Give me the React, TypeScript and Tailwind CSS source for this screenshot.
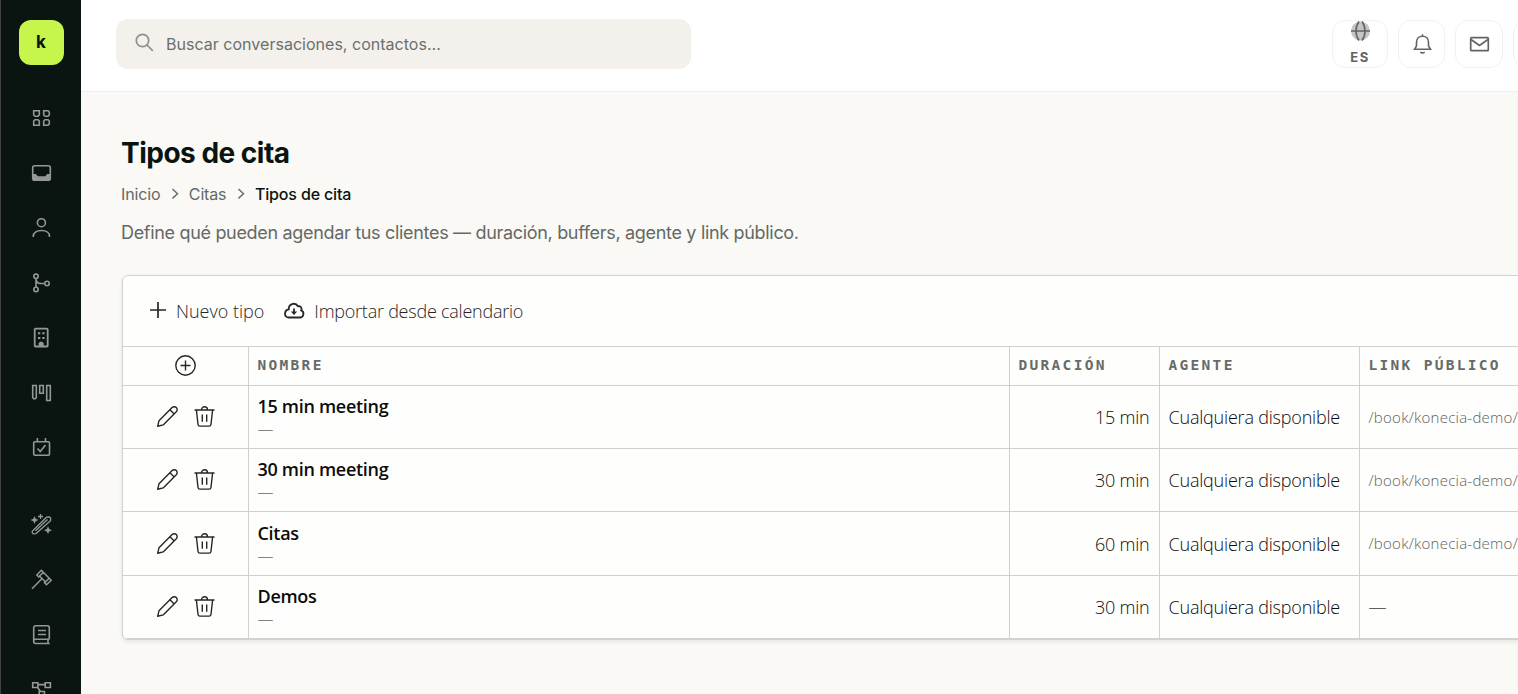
import React from 'react';

interface AppointmentType {
  name: string;
  duration: string;
  agent: string;
  link: string | null;
}

const APPOINTMENT_TYPES: AppointmentType[] = [
  { name: '15 min meeting', duration: '15 min', agent: 'Cualquiera disponible', link: '/book/konecia-demo/' },
  { name: '30 min meeting', duration: '30 min', agent: 'Cualquiera disponible', link: '/book/konecia-demo/' },
  { name: 'Citas', duration: '60 min', agent: 'Cualquiera disponible', link: '/book/konecia-demo/' },
  { name: 'Demos', duration: '30 min', agent: 'Cualquiera disponible', link: null },
];

interface IconProps {
  size?: number;
  className?: string;
  stroke?: number;
  children: React.ReactNode;
}

const Icon: React.FC<IconProps> = ({ size = 20, className = '', stroke = 1.6, children }) => (
  <svg
    width={size}
    height={size}
    viewBox={`0 0 ${size} ${size}`}
    fill="none"
    stroke="currentColor"
    strokeWidth={stroke}
    className={`shrink-0 overflow-visible ${className}`}
  >
    {children}
  </svg>
);

const DashboardIcon = () => (
  <Icon>
    <path d="M2.7 2.7h5.6v4.2L7 8.3H4L2.7 7zM12.7 2.7H17L18.3 4v3L17 8.3h-3L12.7 7zM4 11.7h3l1.3 1.4v4.2H2.7V13zM14 11.7h3l1.3 1.3v3L17 17.3h-4.3V13z" />
  </Icon>
);

const InboxIcon = () => (
  <Icon>
    <rect x="1.7" y="2.7" width="17.6" height="14.6" rx="2" />
    <path d="M1.5 11h3.3l2 2.2h7.4l2-2.2h3.3v5a1.700 1.700 0 0 1-1.700 1.700H3.2A1.700 1.700 0 0 1 1.5 16z" fill="currentColor" stroke="none" />
  </Icon>
);

const UserIcon = () => (
  <Icon>
    <circle cx="10.4" cy="4.7" r="4" />
    <path d="M2.3 19v-.8c0-3.2 3-5.7 8.1-5.7s8.1 2.5 8.1 5.7v.8" />
  </Icon>
);

const BranchIcon = () => (
  <Icon>
    <circle cx="5" cy="3.3" r="2.2" />
    <circle cx="5" cy="16.5" r="2.2" />
    <circle cx="16" cy="10.5" r="2.2" />
    <path d="M5 5.500v8.800M5 6.500c.5 2.600 2 4 4.500 4h4.200" />
  </Icon>
);

const BuildingIcon = () => (
  <Icon stroke={1.8}>
    <rect x="3.7" y="0.7" width="13" height="17.8" rx="1" />
    <path d="M7 5.3h2.300M11.300 5.300h2.300M7 10.100h2.300M11.300 10.100h2.300" strokeWidth="2" />
    <path d="M7.700 18.500v-3.300L9 13.700h2.300l1.400 1.500v3.300z" fill="currentColor" stroke="none" />
  </Icon>
);

const KanbanIcon = () => (
  <Icon>
    <path d="M1.700 2.500h3.600v12l-1 1.200H2.700l-1-1.200zM8.700 2.500h3.600v7.800H8.700zM15.700 2.500h3.600v15h-3.600z" />
  </Icon>
);

const CalendarIcon = () => (
  <Icon>
    <rect x="2.7" y="3.7" width="15.8" height="13.6" rx="1.2" />
    <path d="M6.400 0v3.500M14.500 0v3.500M6.500 10.500l2.700 3L14.500 7" />
  </Icon>
);

const WandIcon = () => (
  <Icon stroke={1.3}>
    <path d="M1.300 16.200 15.500 2.200l3-.2 1.200 1.200-.2 2.600L5 18.600l-2.800.2-1-1.200zM4.500 15.800 16.500 4.500" />
    <path d="M9.500-1v5M7 1.500h5" />
    <path d="M3.500 1 4.700 3.800 7.500 5 4.700 6.200 3.500 9 2.300 6.200-.5 5l2.800-1.200zM17 11.300l1.200 2.700 2.800 1.200-2.800 1.200-1.200 2.700-1.200-2.700-2.800-1.200 2.800-1.200z" fill="currentColor" stroke="none" />
  </Icon>
);

const GavelIcon = () => (
  <Icon stroke={1.5}>
    <path d="M1 18.700 10.600 9M8 5.500l7 7M12 2l7 7M5.800 4.900 10.300.3l2 2L7.700 7zM13.500 12.800l4.700-4.600 2 2-4.700 4.600z" />
  </Icon>
);

const BookIcon = () => (
  <Icon>
    <path d="M18.300 14.200V2.700a2 2 0 0 0-2-2H4.700a2 2 0 0 0-2 2v13.800c0 1.200.9 2 2 2h14M2.700 16.200c0-1.200.9-2 2-2h13.600M17 14.200v4.300M7 5.500h8M7 9.500h8" />
  </Icon>
);

const NetworkIcon = () => (
  <Icon>
    <path d="M1.700 2.700h5.200v4.800H1.700zM14.200 2.700h5.200v4.800h-5.200zM7 4.600h7M6.500 7.200l3 4.300M8.200 11.500h5.200v5H8.200z" />
  </Icon>
);

const GlobeIcon = () => (
  <Icon stroke={1.6}>
    <circle cx="10.5" cy="10" r="9.5" fill="#c4c6c5" stroke="none" />
    <path d="M1 10h19M9 .5C5 6 5 14 9 19.500M12 .5c4 5.500 4 13.500 0 19" />
  </Icon>
);

const BellIcon = () => (
  <Icon stroke={1.6}>
    <path d="M2.500 15.300 4.500 12V8.200c0-3.500 2.500-6 6-6s6 2.500 6 6V12l2 3.300zM10.500.3v1.700M8.300 18.200c1.200.8 3.200.8 4.400 0" />
  </Icon>
);

const MailIcon = () => (
  <Icon stroke={1.7}>
    <rect x="1.700" y="3.700" width="17.600" height="13" rx=".8" />
    <path d="m2 5.500 8.500 6 8.500-6" />
  </Icon>
);

const EditIcon = () => (
  <Icon size={22} stroke={1.4} className="text-[#262626]">
    <path d="M1.700 20.300 3 14.700 16.100 1.600a2.950 2.950 0 0 1 4.200 4.200L7.200 18.900zM14 3.700l4.200 4.200" strokeLinejoin="round" />
  </Icon>
);

const TrashIcon = () => (
  <Icon size={22} stroke={1.4} className="text-[#262626]">
    <path d="M1.500 4h20M8.500 3.800a3 3 0 0 1 6 0M3.400 4 5 18.200c.1 1.200.9 1.900 2 1.900h9c1.100 0 1.900-.7 2-1.900L19.600 4M9.300 8.500v7.200M13.700 8.500v7.200" />
  </Icon>
);

const AddCircleIcon = () => (
  <Icon size={22} stroke={1.4} className="text-[#262626]">
    <circle cx="11.5" cy="10.5" r="9.700" />
    <path d="M11.500 5.500v10M6.500 10.500h10" />
  </Icon>
);

const PlusIcon = () => (
  <Icon size={18} stroke={1.7}>
    <path d="M9 0v16M1 8h16" />
  </Icon>
);

const CloudDownloadIcon = () => (
  <Icon size={21} stroke={1.8}>
    <path d="M4 16.500h11.700a3.700 3.700 0 0 0 1.500-7.100A2.800 2.800 0 0 0 14 5.300 5 5 0 0 0 4.800 6.600v1.700A4.200 4.200 0 0 0 4 16.500z" />
    <path d="M10 7.500V13" />
    <path d="M6.800 10.600h6.400L10 14.100z" fill="currentColor" stroke="none" />
  </Icon>
);

const ChevronIcon = () => (
  <Icon size={10} stroke={1.5} className="text-[#6b706d]">
    <path d="m2.500 0 5 4.700-5 4.700" />
  </Icon>
);

const MAIN_NAV = [DashboardIcon, InboxIcon, UserIcon, BranchIcon, BuildingIcon, KanbanIcon, CalendarIcon];
const TOOLS_NAV = [WandIcon, GavelIcon, BookIcon, NetworkIcon];

const Sidebar = () => (
  <aside className="flex h-full w-[81px] shrink-0 flex-col items-center border-l border-[#424242] bg-[#0a1410] pt-5 text-[#949996]">
    <div className="flex size-[45px] shrink-0 items-center justify-center rounded-xl bg-[#c6f54b] font-['Inter'] text-[17px] font-bold text-[#0a1410]">
      k
    </div>
    <nav className="mt-[43px] flex flex-col gap-[35px]">
      {MAIN_NAV.map((NavIcon, i) => <NavIcon key={i} />)}
    </nav>
    <nav className="mt-[57px] flex flex-col gap-[35px]">
      {TOOLS_NAV.map((NavIcon, i) => <NavIcon key={i} />)}
    </nav>
  </aside>
);

const Header = () => (
  <header className="flex h-[92px] shrink-0 items-start border-b border-[#eeeeec] bg-white pl-[35px]">
    <div className="mt-[19px] flex h-[50px] w-[575px] shrink-0 items-center rounded-xl bg-[#f4f1ec] pl-[19px] text-[#6b706d]">
      <Icon size={20} stroke={1.7} className="-mt-[3px] text-[#8e918e]">
        <circle cx="7.500" cy="7.500" r="6.200" />
        <path d="m12 12 5.800 5.800" />
      </Icon>
      <span className="ml-[11px] text-base tracking-[0.02px]">Buscar conversaciones, contactos…</span>
    </div>
    <div className="ml-[641px] mt-5 flex shrink-0 gap-[10px] text-[#5f6562]">
      <button className="flex h-12 w-14 flex-col items-center rounded-[13px] border border-[#f2f2f1]">
        <GlobeIcon />
        <span className="mt-[9px] text-[13px] leading-[14px] font-bold tracking-[1.5px]">ES</span>
      </button>
      <button className="flex h-12 w-[47px] items-center justify-center rounded-[13px] border border-[#f2f2f1]">
        <BellIcon />
      </button>
      <button className="flex size-12 items-center justify-center rounded-[13px] border border-[#f2f2f1]">
        <MailIcon />
      </button>
      <button className="size-12 shrink-0 rounded-[13px] border border-[#f2f2f1]" />
    </div>
  </header>
);

const headCell = "border-l border-[#d1d1d1] pl-[9px] text-left font-['DejaVu_Sans_Mono'] text-[14.5px] font-bold tracking-[2.3px] text-[#666b68] uppercase";
const bodyCell = 'border-l border-[#d1d1d1] px-[9px]';

const TypesTable = () => (
  <table className="w-[1600px] table-fixed border-collapse">
    <colgroup>
      <col className="w-[125px]" />
      <col className="w-[761px]" />
      <col className="w-[150px]" />
      <col className="w-[200px]" />
      <col />
    </colgroup>
    <thead>
      <tr className="h-[39px] border-y border-[#d1d1d1]">
        <th>
          <div className="flex justify-center"><AddCircleIcon /></div>
        </th>
        <th className={headCell}>Nombre</th>
        <th className={headCell}>Duración</th>
        <th className={headCell}>Agente</th>
        <th className={headCell}>Link público</th>
      </tr>
    </thead>
    <tbody className="font-['Open_Sans'] font-light text-[#0c0c0c]">
      {APPOINTMENT_TYPES.map((type, i) => (
        <tr key={type.name} className={`border-b border-[#d1d1d1] ${i === 2 ? 'h-16' : 'h-[63px]'}`}>
          <td>
            <div className="flex items-center justify-center gap-[15px]">
              <EditIcon />
              <TrashIcon />
            </div>
          </td>
          <td className={bodyCell}>
            <div className="text-lg leading-6 font-semibold tracking-[-0.3px]">{type.name}</div>
            <div className="text-base leading-[22px] text-[#666b68]">—</div>
          </td>
          <td className={`${bodyCell} text-right text-lg tracking-[-0.2px]`}>{type.duration}</td>
          <td className={`${bodyCell} text-lg tracking-[-0.2px] whitespace-nowrap`}>{type.agent}</td>
          <td className={`${bodyCell} text-[15px] tracking-[0.25px] whitespace-nowrap text-[#5c615e]`}>
            {type.link ?? <span className="text-lg">—</span>}
          </td>
        </tr>
      ))}
    </tbody>
  </table>
);

export default function App() {
  return (
    <div className="flex h-[694px] w-[1518px] overflow-hidden bg-[#faf9f5] font-['Inter']">
      <Sidebar />
      <div className="flex min-w-0 flex-1 flex-col overflow-hidden">
        <Header />
        <main className="pt-[43px] pl-10">
          <h1 className="text-[28px] leading-9 font-bold tracking-[-0.5px] text-[#0a1410]">Tipos de cita</h1>
          <nav className="mt-[11px] flex items-center text-base leading-6 tracking-[-0.15px] text-[#646966]">
            <span>Inicio</span>
            <span className="mr-[9px] ml-[9.5px]"><ChevronIcon /></span>
            <span>Citas</span>
            <span className="mr-[9px] ml-[9.500px]"><ChevronIcon /></span>
            <span className="font-medium text-[#0a1410]">Tipos de cita</span>
          </nav>
          <p className="mt-[13px] text-lg leading-7 tracking-[-0.32px] text-[#646966]">
            Define qué pueden agendar tus clientes — duración, buffers, agente y link público.
          </p>
          <section className="mt-7 ml-px w-[1602px] overflow-hidden rounded-md border border-[#d1d1d1] bg-[#fefefd] shadow-[0_2px_4px_rgba(0,0,0,0.08)]">
            <div className="flex h-[70px] items-center pl-[26px] font-['Open_Sans'] text-lg font-light text-[#262626]">
              <button className="flex items-center gap-[9px]"><PlusIcon /> Nuevo tipo</button>
              <button className="ml-5 flex items-center gap-[9px] tracking-[-0.24px]"><CloudDownloadIcon /> Importar desde calendario</button>
            </div>
            <TypesTable />
          </section>
        </main>
      </div>
    </div>
  );
}
